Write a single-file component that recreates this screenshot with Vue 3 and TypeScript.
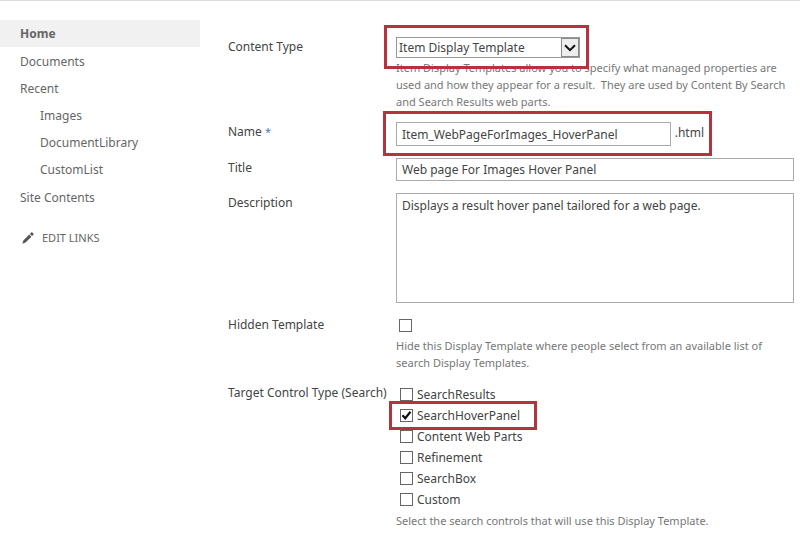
<script setup lang="ts">
import { ref } from 'vue'

interface TargetControl {
  id: string
  label: string
  marked?: boolean
}

const contentType = ref('Item Display Template')
const contentTypes = ['Item Display Template', 'Control Display Template', 'Filter Display Template']
const fileName = ref('Item_WebPageForImages_HoverPanel')
const title = ref('Web page For Images Hover Panel')
const description = ref('Displays a result hover panel tailored for a web page.')
const hidden = ref(false)

const controls: TargetControl[] = [
  { id: 'search-results', label: 'SearchResults' },
  { id: 'search-hover-panel', label: 'SearchHoverPanel', marked: true },
  { id: 'content-web-parts', label: 'Content Web Parts' },
  { id: 'refinement', label: 'Refinement' },
  { id: 'search-box', label: 'SearchBox' },
  { id: 'custom', label: 'Custom' },
]
const selected = ref<string[]>(['search-hover-panel'])
const recent = ['Images', 'DocumentLibrary', 'CustomList']
</script>

<template>
  <div class="page">
    <nav class="sidebar">
      <ul class="links">
        <li><a href="#" class="link current">Home</a></li>
        <li><a href="#" class="link">Documents</a></li>
        <li>
          <a href="#" class="link">Recent</a>
          <ul class="links nested">
            <li v-for="item in recent" :key="item"><a href="#" class="link">{{ item }}</a></li>
          </ul>
        </li>
        <li><a href="#" class="link">Site Contents</a></li>
      </ul>
      <a href="#" class="edit">
        <svg class="pencil" viewBox="0 0 12 12" aria-hidden="true">
          <path d="M0.3 11.7 1.4 8.4 7.2 2.6 9.4 4.8 3.6 10.6Z" />
          <path d="M7.9 1.9 9.2 0.6Q9.8 0.1 10.4 0.6L11.4 1.6Q11.9 2.2 11.4 2.8L10.1 4.1Z" />
        </svg>
        <span>EDIT LINKS</span>
      </a>
    </nav>

    <form class="form" @submit.prevent>
      <div class="row">
        <label class="name" for="content-type">Content Type</label>
        <div class="field">
          <div class="select-wrap">
            <select id="content-type" v-model="contentType" class="select">
              <option v-for="type in contentTypes" :key="type">{{ type }}</option>
            </select>
            <span class="arrow">
              <svg viewBox="0 0 12 8" aria-hidden="true"><path d="M1 1.2 6 6.2 11 1.2" /></svg>
            </span>
            <span class="mark mark-type"></span>
          </div>
          <p class="help">
            Item Display Templates allow you to specify what managed properties are used and how they appear for a
            result.&nbsp; They are used by Content By Search and Search Results web parts.
          </p>
        </div>
      </div>

      <div class="row">
        <label class="name" for="file-name">Name <span class="required">*</span></label>
        <div class="field">
          <div class="file">
            <input id="file-name" v-model="fileName" class="text" type="text" />
            <span class="suffix">.html</span>
            <span class="mark mark-file"></span>
          </div>
        </div>
      </div>

      <div class="row">
        <label class="name" for="title">Title</label>
        <div class="field"><input id="title" v-model="title" class="text" type="text" /></div>
      </div>

      <div class="row">
        <label class="name" for="description">Description</label>
        <div class="field"><textarea id="description" v-model="description" class="text area"></textarea></div>
      </div>

      <div class="row">
        <label class="name" for="hidden">Hidden Template</label>
        <div class="field">
          <div class="single"><input id="hidden" v-model="hidden" class="check" type="checkbox" /></div>
          <p class="help">
            Hide this Display Template where people select from an available list of search Display Templates.
          </p>
        </div>
      </div>

      <div class="row" role="group" aria-labelledby="targets">
        <span id="targets" class="name">Target Control Type (Search)</span>
        <div class="field">
          <div class="options">
            <div v-for="control in controls" :key="control.id" class="option">
              <input :id="control.id" v-model="selected" class="check" type="checkbox" :value="control.id" />
              <label :for="control.id">{{ control.label }}</label>
              <span v-if="control.marked" class="mark mark-option"></span>
            </div>
          </div>
          <p class="help">Select the search controls that will use this Display Template.</p>
        </div>
      </div>
    </form>
  </div>
</template>

<style>
body {
  margin: 0;
  background: #fff;
}
</style>

<style scoped>
.page {
  display: flex;
  gap: 28px;
  box-sizing: border-box;
  border-top: 1px solid #dcdcdc;
  padding-right: 6px;
  font-family: 'Noto Sans', 'Open Sans', sans-serif;
  font-size: 12px;
  color: #444;
}

.sidebar {
  flex: 0 0 200px;
  padding-top: 19px;
}

.links {
  list-style: none;
  margin: 0;
  padding: 0;
}

.nested {
  margin: 0;
}

.link {
  display: block;
  padding-left: 20px;
  line-height: 27px;
  color: #666;
  text-decoration: none;
}

.nested .link {
  padding-left: 40px;
}

.current {
  margin-bottom: 1px;
  background: #f1f1f1;
  font-weight: 700;
}

.nested {
  padding-bottom: 1px;
}

.edit {
  display: flex;
  align-items: center;
  gap: 8px;
  margin: 16px 0 0 22px;
  font-size: 11px;
  line-height: 22px;
  color: #666;
  text-decoration: none;
}

.pencil {
  width: 12px;
  height: 12px;
  fill: #555;
}

.form {
  flex: 1;
  min-width: 0;
  display: flex;
  flex-direction: column;
  gap: 12px;
  padding-top: 36px;
}

.row {
  display: grid;
  grid-template-columns: 168px minmax(0, 1fr);
}

.name {
  line-height: 20px;
  white-space: nowrap;
}

.required {
  font-size: 11px;
  color: #4a7ebb;
}

.help {
  margin: 1px 0 0;
  font-size: 11px;
  line-height: 17px;
  color: #777;
}

.select-wrap {
  position: relative;
  display: flex;
  width: 184px;
}

.select {
  appearance: none;
  width: 100%;
  height: 21px;
  padding: 0 20px 0 2px;
  border: 1px solid #999;
  border-radius: 0;
  background: #fff;
  font: inherit;
  color: #444;
}

.arrow {
  position: absolute;
  top: 1px;
  right: 1px;
  display: flex;
  align-items: center;
  justify-content: center;
  box-sizing: border-box;
  width: 18px;
  height: 19px;
  border: 1px solid #8a8a8a;
  background: #eee;
  pointer-events: none;
}

.arrow svg {
  width: 12px;
  height: 8px;
  fill: none;
  stroke: #111;
  stroke-width: 2;
}

.file {
  position: relative;
  display: flex;
  gap: 4px;
  width: 308px;
}

.suffix {
  line-height: 22px;
}

.text {
  display: block;
  box-sizing: border-box;
  width: 100%;
  height: 24px;
  padding: 0 5px;
  border: 1px solid #ababab;
  border-radius: 0;
  background: #fff;
  font: inherit;
  color: #444;
}

#title {
  height: 23px;
}

.area {
  height: 110px;
  padding: 3px 5px;
  line-height: 17px;
  resize: none;
}

.single {
  display: flex;
  align-items: center;
  height: 21px;
  padding-left: 3px;
}

.check {
  appearance: none;
  flex: none;
  box-sizing: border-box;
  width: 13px;
  height: 13px;
  margin: 0;
  border: 1px solid #666;
  background: #fff;
}

.check:checked {
  background: #fff url("data:image/svg+xml,%3Csvg xmlns='http://www.w3.org/2000/svg' viewBox='0 0 11 11'%3E%3Cpath d='M1.5 5.2 4.2 8.2 9.5 1.8' fill='none' stroke='%23111' stroke-width='2.2'/%3E%3C/svg%3E");
}

.options {
  padding: 1px 0 1px 4px;
}

.option {
  position: relative;
  display: flex;
  align-items: center;
  gap: 4px;
  width: fit-content;
  height: 21px;
}

.mark {
  position: absolute;
  border: 3px solid #b5323e;
  pointer-events: none;
}

.mark-type {
  inset: -12px -9px -11px -12px;
}

.mark-file {
  inset: -11px -8px -10px -13px;
}

.mark-option {
  inset: -4px -17px -4px -11px;
}
</style>
